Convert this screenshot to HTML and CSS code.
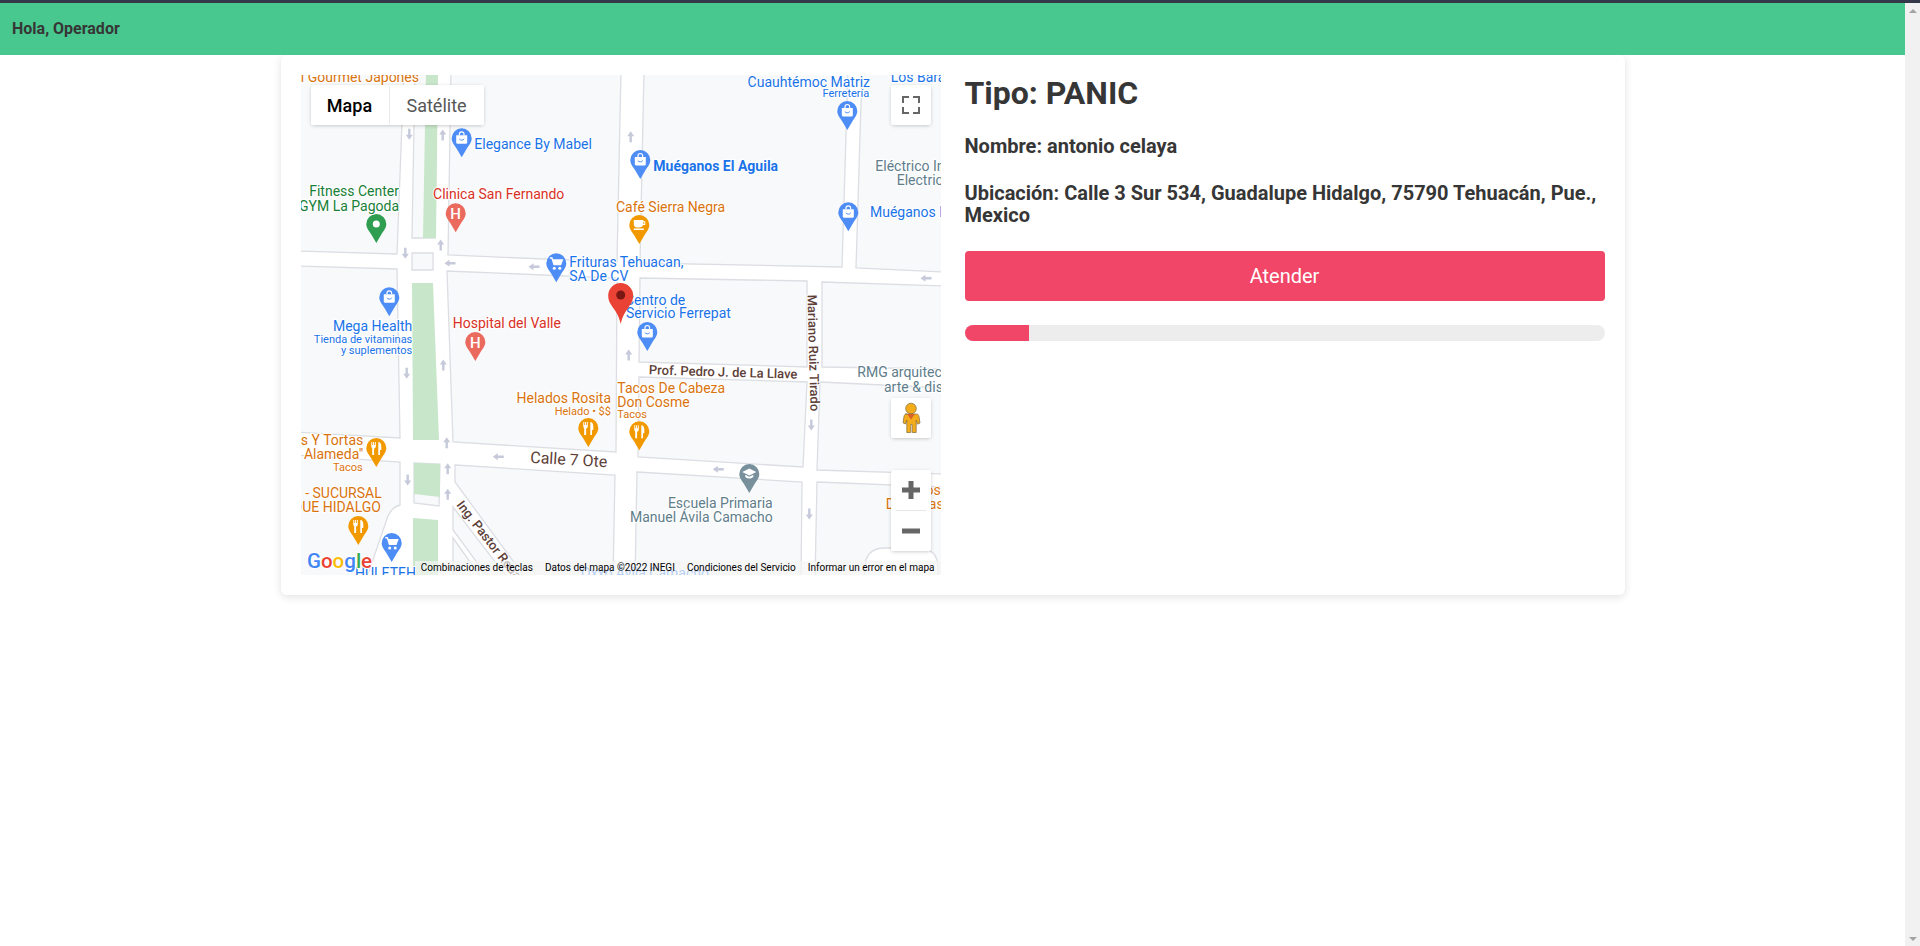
FILE: index.html
```html
<!DOCTYPE html>
<html lang="es">
<head>
<meta charset="utf-8">
<title>Alerta</title>
<link rel="stylesheet" href="styles.css">
</head>
<body>
<div class="topline"></div>
<div class="frame">
  <div class="page">
    <nav class="navbar"><strong>Hola, Operador</strong></nav>
    <main class="card">
      <div class="map">
        <svg class="map-canvas" viewBox="301 75 640 500" width="640" height="500" xmlns="http://www.w3.org/2000/svg">
          <defs>
            <path id="p" d="M0-10a10 10 0 0 1 10 10c0 4-2.500 6.500-5 10.500L0 19l-5-8.500C-7.500 6.500-10 4-10 0a10 10 0 0 1 10-10z"/>
            <g id="bag"><use href="#p" class="f-blue"/><path class="f-white" d="M-5.500-3h11v7a1.500 1.500 0 0 1-1.500 1.500h-8A1.500 1.500 0 0 1-5.500 4z"/><path class="s-white" d="M-2.300-3v-1.200a2.300 2.300 0 0 1 4.600 0V-3"/><path class="s-blue" d="M-2.500 0.500c1 1.800 4 1.800 5 0"/></g>
            <g id="cart"><use href="#p" class="f-blue"/><path class="f-white" d="M-6.500-6h2.600l.7 2H7L4.800 2h-7.600L-4.800-4.500h-1.700z"/><circle class="f-white" cx="-2" cy="5" r="1.500"/><circle class="f-white" cx="3.500" cy="5" r="1.500"/></g>
            <g id="food"><use href="#p" class="f-orange"/><path class="f-white" d="M-5-6h1v3h.8v-3h1v3h.8v-3h.9v4.500c0 1-.8 1.800-1.700 2V7h-1.900V.5C-4.200.300-5-.500-5-1.500zM2-6c2 0 3 2 3 4.500V2H3.700v5H2z"/></g>
            <g id="cup"><use href="#p" class="f-orange"/><path class="f-white" d="M-5.500-5h9.500v1.200h2v3.800h-2.200C3.300 1.500 1.800 2.500 0 2.500h-2.500c-1.800 0-3-1.500-3-3.500zM4-2.800V-1h1v-1.800zM-5.500 3.500h10V5h-10z"/></g>
            <g id="hosp"><use href="#p" class="f-red"/><text class="pin-h" y="5.500">H</text></g>
            <g id="school"><use href="#p" class="f-slate"/><path class="f-white" d="M-7-2 0-5.500 7-2 0 1.500zM-4 .800 0 2.800 4 .800V3Q0 6-4 3z"/></g>
            <path id="au" d="M0-5.500 3.500-.5H1.200V5.500H-1.200V-.5H-3.500z"/>
            <path id="ad" d="M0 5.500 3.500.5H1.200V-5.500H-1.200V.5H-3.500z"/>
            <path id="al" d="M-5.500 0-.5-3.500V-1.200H5.500V1.200H-.5V3.500z"/>
          </defs>

          <rect class="road" x="301" y="75" width="640" height="500"/>

          <polygon class="block" points="296,70 404,70 397,254 296,251"/>
          <polygon class="block" points="296,266 397,269 400,438 296,432"/>
          <path class="block" d="M296 455 400 462V505Q392 507 388 516L366 580H296z"/>
          <polygon class="block" points="415,70 437,70 435,238 412,238"/>
          <polygon class="green" points="426,70 438,70 436,238 423,238"/>
          <polygon class="block" points="412,253 433,253 433,270 412,270"/>
          <polygon class="green" points="412,283 433,283 439,440 413,440"/>
          <polygon class="block" points="414,463 440,464 439,506 414,503"/>
          <polygon class="green" points="414,463 440,464 440,497 414,494"/>
          <polygon class="green" points="413,518 438,520 438,580 413,580"/>

          <polygon class="block" points="451,70 621,70 617,262 448,255"/>
          <polygon class="block" points="644,70 848,70 842,267 640,263"/>
          <polygon class="block" points="862,70 856,268 946,272 946,70"/>
          <polygon class="block" points="447,271 617,278 616,452 453,442"/>
          <polygon class="block" points="640,278 807,281 807,367 639,362"/>
          <polygon class="block" points="639,377 807,382 803,467 638,457"/>
          <polygon class="block" points="822,282 946,286 946,369 822,367"/>
          <polygon class="block" points="820,382 946,388 946,474 817,470"/>
          <polygon class="block" points="455,465 615,475 613,580 527,580 455,482"/>
          <polygon class="block" points="637,472 802,482 801,580 635,580"/>
          <polygon class="block" points="817,482 946,487 946,580 815,580"/>
          <polygon class="block" points="453,507 509,580 490,580 453,530"/>
          <polygon class="block" points="453,538 483,580 453,580"/>
          <path class="roundabout" d="M865 580V568Q865 548 885 548H918Q938 548 938 568V580z"/>

          <g class="arrows">
            <use href="#au" x="442.700" y="135"/><use href="#ad" x="409.300" y="134.300"/>
            <use href="#au" x="440.700" y="245"/><use href="#ad" x="405.300" y="253.300"/>
            <use href="#al" x="450" y="263.300"/><use href="#al" x="534" y="266.700"/>
            <use href="#au" x="630.700" y="136.700"/><use href="#al" x="926" y="278.300"/>
            <use href="#au" x="443.300" y="365"/><use href="#ad" x="406.700" y="373.300"/>
            <use href="#au" x="446.700" y="442.700"/><use href="#au" x="447.700" y="468.700"/>
            <use href="#au" x="447.700" y="494.300"/><use href="#ad" x="407.700" y="480"/>
            <use href="#al" x="498.300" y="456.700"/><use href="#au" x="628.700" y="355"/>
            <use href="#ad" x="811.300" y="425"/><use href="#al" x="718.300" y="469.300"/>
            <use href="#ad" x="809.300" y="514"/>
          </g>

          <text class="rd" x="723" y="376.500" text-anchor="middle" transform="rotate(1.700 723 376.500)">Prof. Pedro J. de La Llave</text>
          <text class="rd" x="809" y="353" text-anchor="middle" transform="rotate(88.500 809 353)">Mariano Ruiz Tirado</text>
          <text class="rd rd-lg" x="568.500" y="465" text-anchor="middle" transform="rotate(3.500 568.500 465)">Calle 7 Ote</text>
          <text class="rd" x="456" y="505" transform="rotate(52 456 505)">Ing. Pastor Rouaix</text>

          <use href="#bag" x="461.700" y="138.300"/>
          <g><use href="#p" class="f-green" x="376.300" y="224"/><circle class="f-white" cx="376.300" cy="224" r="3.500"/></g>
          <use href="#hosp" x="455.700" y="213.300"/>
          <use href="#cart" x="556.300" y="263.300"/>
          <use href="#bag" x="389.300" y="297.300"/>
          <use href="#bag" x="640.300" y="160"/>
          <use href="#bag" x="847.300" y="111"/>
          <use href="#cup" x="639.300" y="225"/>
          <use href="#bag" x="848.300" y="212.300"/>
          <use href="#bag" x="647.300" y="332"/>
          <use href="#hosp" x="475.300" y="342"/>
          <use href="#food" x="588.300" y="428"/>
          <use href="#food" x="639.300" y="431.300"/>
          <use href="#food" x="376.300" y="448"/>
          <use href="#food" x="358.300" y="526"/>
          <use href="#cart" x="391.700" y="543"/>
          <use href="#school" x="749.300" y="474"/>

          <g class="lb">
            <text class="c-orange" x="419" y="81.700" text-anchor="end">l Gourmet Japones</text>
            <text class="c-blue" x="474.300" y="148.700">Elegance By Mabel</text>
            <text class="c-green" x="399" y="196.400" text-anchor="end">Fitness Center</text>
            <text class="c-green" x="399" y="210.700" text-anchor="end">GYM La Pagoda</text>
            <text class="c-red" x="498.700" y="199" text-anchor="middle">Clinica San Fernando</text>
            <text class="c-blue" x="569.300" y="266.700">Frituras Tehuacan,</text>
            <text class="c-blue" x="569.300" y="280.700">SA De CV</text>
            <text class="c-blue b" x="653.300" y="170.700">Muéganos El Aguila</text>
            <text class="c-blue" x="870" y="86.700" text-anchor="end">Cuauhtémoc Matriz</text>
            <text class="c-blue sm" x="869.300" y="96.500" text-anchor="end">Ferretería</text>
            <text class="c-blue" x="890.700" y="81.700">Los Barateros</text>
            <text class="c-slate" x="875.300" y="170.700">Eléctrico Industrial</text>
            <text class="c-slate" x="896.700" y="184.700">Electricos</text>
            <text class="c-orange" x="616" y="211.700">Café Sierra Negra</text>
            <text class="c-blue" x="870" y="216.700">Muéganos El Aguila</text>
            <text class="c-blue" x="625" y="304.700">Centro de</text>
            <text class="c-blue" x="626" y="318.200">Servicio Ferrepat</text>
            <text class="c-blue" x="412.300" y="331.400" text-anchor="end">Mega Health</text>
            <text class="c-blue sm" x="412.300" y="342.800" text-anchor="end">Tienda de vitaminas</text>
            <text class="c-blue sm" x="412.300" y="354.200" text-anchor="end">y suplementos</text>
            <text class="c-red" x="452.700" y="328.200">Hospital del Valle</text>
            <text class="c-orange" x="611" y="403.400" text-anchor="end">Helados Rosita</text>
            <text class="c-orange sm" x="611" y="414.800" text-anchor="end">Helado • $$</text>
            <text class="c-orange" x="617.300" y="392.700">Tacos De Cabeza</text>
            <text class="c-orange" x="617.300" y="406.700">Don Cosme</text>
            <text class="c-orange sm" x="617.300" y="417.800">Tacos</text>
            <text class="c-slate" x="772.700" y="507.500" text-anchor="end">Escuela Primaria</text>
            <text class="c-slate" x="772.700" y="522" text-anchor="end">Manuel Ávila Camacho</text>
            <text class="c-slate" x="857.300" y="377.400">RMG arquitectura</text>
            <text class="c-slate" x="884" y="391.700">arte &amp; diseño</text>
            <text class="c-orange" x="363.300" y="445" text-anchor="end">Tacos Y Tortas</text>
            <text class="c-orange" x="363.300" y="459" text-anchor="end">"La Alameda"</text>
            <text class="c-orange sm" x="362.700" y="470.500" text-anchor="end">Tacos</text>
            <text class="c-orange" x="381.700" y="498.400" text-anchor="end">La - SUCURSAL</text>
            <text class="c-orange" x="381" y="512.400" text-anchor="end">PARQUE HIDALGO</text>
            <text class="c-blue" x="355" y="578">HULETEH</text>
            <text class="c-orange" x="903" y="494.700">Tacos</text>
            <text class="c-orange" x="885.700" y="508.700">Don Elias</text>
            <text class="c-blue" x="581" y="578">Oxxo Ávila Camacho</text>
          </g>

          <path class="f-pin" d="M620.700 283a12.500 12.500 0 0 1 12.500 12.500c0 7-4 10.500-7.500 16-2.500 4-4 8-5 12.500-1-4.500-2.500-8.500-5-12.500-3.500-5.500-7.500-9-7.500-16A12.500 12.500 0 0 1 620.700 283z"/>
          <circle class="f-pindot" cx="620.700" cy="295" r="4.500"/>

          <text class="logo" x="307" y="567.500"><tspan class="g-b">G</tspan><tspan class="g-r">o</tspan><tspan class="g-y">o</tspan><tspan class="g-b">g</tspan><tspan class="g-g">l</tspan><tspan class="g-r">e</tspan></text>
        </svg>

        <div class="map-type">
          <button class="mt mt-on">Mapa</button>
          <button class="mt">Satélite</button>
        </div>
        <button class="ctl ctl-full" aria-label="Pantalla completa">
          <svg viewBox="0 0 40 40" width="40" height="40"><path class="ico-line" d="M12 18v-6h6M22 12h6v6M28 22v6h-6M18 28h-6v-6"/></svg>
        </button>
        <button class="ctl ctl-peg" aria-label="Street View">
          <svg viewBox="0 0 40 40" width="40" height="40">
            <circle class="peg" cx="20" cy="10.500" r="5.300"/>
            <path class="peg" d="M14.500 16h11c1.500 0 2 1 2.500 2.500l1 6.500-2.500 1.200-1.300-4v12.300h-4v-8h-1.400v8h-4V22l-1.300 4-2.500-1.200 1-6.500c.5-1.500 1-2.300 2.500-2.300z"/>
            <path class="peg-v" d="M16 16h8L20 21.500z"/>
          </svg>
        </button>
        <div class="ctl-zoom">
          <button class="zb" aria-label="Acercar"><svg viewBox="0 0 40 40" width="40" height="40"><path class="ico-fill" d="M17.500 11h5v6.500H29v5h-6.500V29h-5v-6.500H11v-5h6.500z"/></svg></button>
          <span class="zsep"></span>
          <button class="zb" aria-label="Alejar"><svg viewBox="0 0 40 40" width="40" height="40"><path class="ico-fill" d="M11 17.500h18v5H11z"/></svg></button>
        </div>
        <div class="attr">
          <span>Combinaciones de teclas</span>
          <span>Datos del mapa ©2022 INEGI</span>
          <span>Condiciones del Servicio</span>
          <span>Informar un error en el mapa</span>
        </div>
      </div>

      <section class="info">
        <h1 class="title">Tipo: PANIC</h1>
        <h3 class="sub sub-name">Nombre: antonio celaya</h3>
        <h3 class="sub">Ubicación: Calle 3 Sur 534, Guadalupe Hidalgo, 75790 Tehuacán, Pue., Mexico</h3>
        <button class="attend">Atender</button>
        <div class="progress"><div class="progress-fill" style="width:10%"></div></div>
      </section>
    </main>
  </div>
  <aside class="scrollbar">
    <span class="sb-up"></span>
    <span class="sb-down"></span>
  </aside>
</div>
</body>
</html>
```
FILE: styles.css
```css
* { box-sizing: border-box; }
html, body { margin: 0; height: 100%; overflow: hidden; }
body {
  display: flex;
  flex-direction: column;
  background: #fff;
  color: #363636;
  font-family: Roboto, "Liberation Sans", sans-serif;
}
button { font-family: inherit; border: 0; padding: 0; cursor: pointer; }

.topline { height: 3px; flex: none; background: #343848; }
.frame { flex: 1; display: flex; min-height: 0; }
.page { flex: 1; min-width: 0; }

.scrollbar {
  width: 15px;
  flex: none;
  background: #f1f1f1;
  display: flex;
  flex-direction: column;
  justify-content: space-between;
  align-items: center;
  padding: 6px 0 5px;
}
.sb-up, .sb-down { width: 0; height: 0; border-left: 4px solid transparent; border-right: 4px solid transparent; }
.sb-up { border-bottom: 4px solid #a3a3a3; }
.sb-down { border-top: 4px solid #a3a3a3; }

.navbar {
  height: 52px;
  display: flex;
  align-items: center;
  padding: 0 12px 2px;
  background: #48c78e;
  position: relative;
  z-index: 1;
  font-size: 16px;
}
.navbar strong { font-weight: 700; color: #363636; }

.card {
  width: 1344px;
  height: 540px;
  margin: 0 auto;
  padding: 20px;
  display: grid;
  grid-template-columns: 640px 640px;
  column-gap: 24px;
  background: #fff;
  border-radius: 6px;
  box-shadow: 0 2px 8px rgba(10, 10, 10, .12);
}

.map { position: relative; width: 640px; height: 500px; overflow: hidden; }
.map-canvas { display: block; }

.road { fill: #fff; }
.block { fill: #f8f9fb; stroke: #dcdee3; stroke-width: 1.300; }
.green { fill: #c8e6c9; }
.roundabout { fill: #fff; stroke: #dcdee3; stroke-width: 1.300; }
.arrows { fill: #c6c9da; }

.f-blue { fill: #4e8df5; }
.f-orange { fill: #f29900; }
.f-red { fill: #ea6a5e; }
.f-green { fill: #2f9e50; }
.f-slate { fill: #78909c; }
.f-white { fill: #fff; }
.s-white { fill: none; stroke: #fff; stroke-width: 1.200; }
.s-blue { fill: none; stroke: #4e8df5; stroke-width: 1; }
.pin-h { fill: #fff; font: 500 15px Roboto, sans-serif; text-anchor: middle; }
.f-pin { fill: #ea4335; }
.f-pindot { fill: #7a1712; }

.lb text {
  font-size: 14px;
  font-family: Roboto, sans-serif;
  paint-order: stroke;
  stroke: #fff;
  stroke-width: 2px;
  stroke-linejoin: round;
}
.lb .sm { font-size: 11px; }
.lb .b { font-weight: 700; }
.c-blue { fill: #1a73e8; }
.c-orange { fill: #d9730d; }
.c-red { fill: #d93025; }
.c-green { fill: #188038; }
.c-slate { fill: #607d8b; }

.rd {
  font: 500 13px Roboto, sans-serif;
  fill: #5d4037;
  paint-order: stroke;
  stroke: #fff;
  stroke-width: 2px;
  stroke-linejoin: round;
}
.rd-lg { font-size: 16px; font-weight: 400; }

.logo { font: 500 20.500px Roboto, sans-serif; paint-order: stroke; stroke: #fff; stroke-width: 2px; stroke-linejoin: round; }
.g-b { fill: #4285f4; }
.g-r { fill: #ea4335; }
.g-y { fill: #fbbc05; }
.g-g { fill: #34a853; }

.map-type {
  position: absolute;
  top: 10px;
  left: 10px;
  display: flex;
  height: 40px;
  background: #fff;
  border-radius: 2px;
  box-shadow: 0 1px 4px -1px rgba(0, 0, 0, .3);
}
.mt { height: 40px; background: #fff; font-size: 18px; color: #565656; padding: 0 17px; border-radius: 2px; }
.mt-on { color: #000; font-weight: 500; border-right: 1px solid #ebebeb; width: 79px; padding: 0; }

.ctl, .ctl-zoom {
  position: absolute;
  right: 10px;
  width: 40px;
  background: #fff;
  border-radius: 2px;
  box-shadow: 0 1px 4px -1px rgba(0, 0, 0, .3);
}
.ctl { height: 40px; display: block; }
.ctl svg, .zb svg { display: block; }
.ctl-full { top: 10px; }
.ctl-peg { top: 323px; }
.ctl-zoom { top: 395px; height: 81px; display: flex; flex-direction: column; align-items: center; }
.zb { width: 40px; height: 40px; background: transparent; }
.zsep { width: 30px; height: 1px; background: #e6e6e6; }
.ico-line { fill: none; stroke: #666; stroke-width: 2; }
.ico-fill { fill: #666; }
.peg { fill: #f5ac1b; stroke: #7d6a3c; stroke-width: .7; }
.peg-v { fill: #d9622b; }

.attr {
  position: absolute;
  right: 0;
  bottom: 0;
  display: flex;
  height: 14px;
  font-size: 10px;
  line-height: 14px;
  color: #000;
  white-space: nowrap;
}
.attr span { padding: 0 6px; background: rgba(245, 245, 245, .7); }

.info { min-width: 0; }
.title { margin: 0 0 24px; font-size: 32px; font-weight: 700; line-height: 36px; color: #363636; }
.sub { margin: 0 0 25px; font-size: 20px; font-weight: 700; line-height: 22px; color: #363636; }
.attend {
  display: block;
  width: 100%;
  height: 50px;
  border-radius: 4px;
  background: #f14668;
  color: #fff;
  font-size: 20px;
}
.progress { height: 16px; margin-top: 24px; border-radius: 8px; background: #ededed; overflow: hidden; }
.progress-fill { height: 100%; background: #f14668; }
```
